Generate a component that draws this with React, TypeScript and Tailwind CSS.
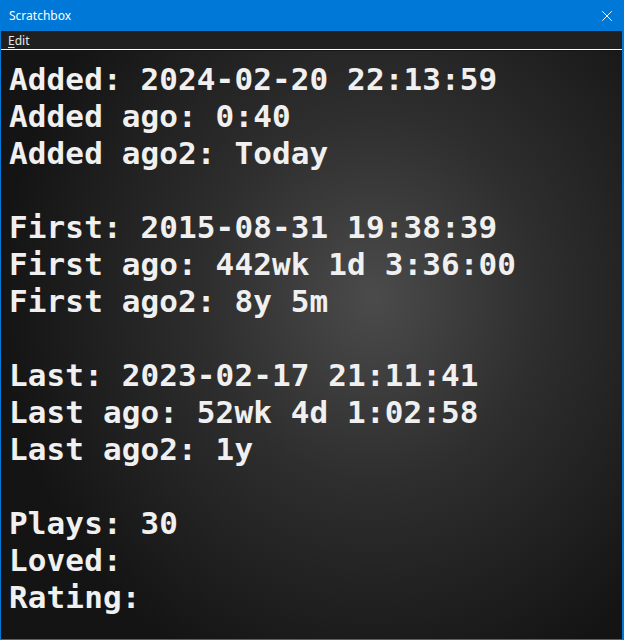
import { X } from 'lucide-react'

const lines = [
  'Added: 2024-02-20 22:13:59',
  'Added ago: 0:40',
  'Added ago2: Today',
  '',
  'First: 2015-08-31 19:38:39',
  'First ago: 442wk 1d 3:36:00',
  'First ago2: 8y 5m',
  '',
  'Last: 2023-02-17 21:11:41',
  'Last ago: 52wk 4d 1:02:58',
  'Last ago2: 1y',
  '',
  'Plays: 30',
  'Loved:',
  'Rating:',
]

export default function App() {
  return (
    <div className="w-[624px] h-[640px] flex flex-col bg-[#0078d7] pl-px pr-[2px] pb-px overflow-hidden">
      {/* Title bar */}
      <div className="h-[31px] -ml-px -mr-[2px] flex items-center justify-between pl-[9px] pr-[8px] bg-[#0078d7] text-white text-[12px] font-['Noto_Sans',sans-serif]">
        <span>Scratchbox</span>
        <X size={18} strokeWidth={1.3} />
      </div>

      {/* Menu */}
      <div className="h-[18px] flex items-center pt-px bg-[#202020] pl-[7px] text-[12px] text-[#e8e8e8] font-['Noto_Sans',sans-serif]">
        <span><span className="underline underline-offset-2">E</span>dit</span>
      </div>
      <div className="h-px bg-white" />
      <div className="h-px bg-[#151515]" />

      {/* Content */}
      <div className="flex-1 pt-[10px] pl-[8px] bg-[radial-gradient(ellipse_60%_70%_at_60%_42%,#4b4b4b_0%,#2e2e2e_45%,#141414_100%)]">
        {lines.map((l, i) => (
          <div
            key={i}
            className="h-[37px] leading-[37px] text-[31px] tracking-[0.12px] font-bold text-[#f0f0f0] whitespace-pre font-['DejaVu_Sans_Mono',monospace]"
          >
            {l}
          </div>
        ))}
      </div>
    </div>
  )
}
